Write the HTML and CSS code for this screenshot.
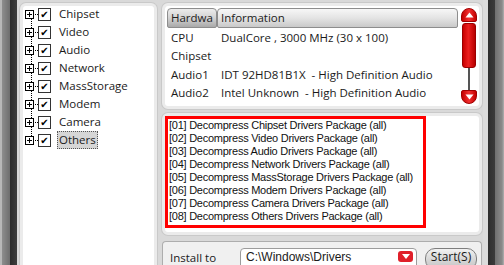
FILE: index.html
```html
<!DOCTYPE html>
<html lang="en">
<head>
  <meta charset="UTF-8" />
  <title>Driver Installer</title>
  <link rel="stylesheet" href="styles.css">
</head>
<body>

  <div class="frame-left"></div>

  <div class="content">

    <div class="tree-panel">
      <ul class="tree">
        <li class="tree-row"><span class="plus"></span><span class="check">&#10004;</span><span class="label">Chipset</span></li>
        <li class="tree-row"><span class="plus"></span><span class="check">&#10004;</span><span class="label">Video</span></li>
        <li class="tree-row"><span class="plus"></span><span class="check">&#10004;</span><span class="label">Audio</span></li>
        <li class="tree-row"><span class="plus"></span><span class="check">&#10004;</span><span class="label">Network</span></li>
        <li class="tree-row"><span class="plus"></span><span class="check">&#10004;</span><span class="label">MassStorage</span></li>
        <li class="tree-row"><span class="plus"></span><span class="check">&#10004;</span><span class="label">Modem</span></li>
        <li class="tree-row"><span class="plus"></span><span class="check">&#10004;</span><span class="label">Camera</span></li>
        <li class="tree-row last"><span class="plus"></span><span class="check">&#10004;</span><span class="label selected">Others</span></li>
      </ul>
    </div>

    <div class="right-col">

      <div class="panel hw-panel">
        <div class="hw-list">
          <div class="hw-head">
            <div class="col-btn col-hw">Hardwa</div>
            <div class="col-btn col-info">Information</div>
          </div>
          <div class="hw-row"><span class="c1">CPU</span><span>DualCore , 3000 MHz (30 x 100)</span></div>
          <div class="hw-row"><span class="c1">Chipset</span><span></span></div>
          <div class="hw-row"><span class="c1">Audio1</span><span>IDT 92HD81B1X &nbsp;- High Definition Audio</span></div>
          <div class="hw-row"><span class="c1">Audio2</span><span>Intel Unknown &nbsp;- High Definition Audio</span></div>
        </div>
        <div class="scrollbar">
          <div class="sb-btn sb-up">
            <svg width="9" height="6" viewBox="0 0 9 6"><path d="M4.5 0.5 L8.5 5.5 L0.5 5.5 Z" fill="#fff"/></svg>
          </div>
          <div class="sb-thumb"></div>
          <div class="sb-track"></div>
          <div class="sb-btn sb-down">
            <svg width="9" height="6" viewBox="0 0 9 6"><path d="M0.5 0.5 L8.5 0.5 L4.5 5.5 Z" fill="#fff"/></svg>
          </div>
        </div>
      </div>

      <div class="panel log-panel">
        <div class="log">
          <div>[01] Decompress Chipset Drivers Package (all)</div>
          <div>[02] Decompress Video Drivers Package (all)</div>
          <div>[03] Decompress Audio Drivers Package (all)</div>
          <div>[04] Decompress Network Drivers Package (all)</div>
          <div>[05] Decompress MassStorage Drivers Package (all)</div>
          <div>[06] Decompress Modem Drivers Package (all)</div>
          <div>[07] Decompress Camera Drivers Package (all)</div>
          <div>[08] Decompress Others Drivers Package (all)</div>
        </div>
      </div>

      <div class="install-panel">
        <span class="install-label">Install to</span>
        <div class="combo">
          <span>C:\Windows\Drivers</span>
          <span class="combo-btn">
            <svg width="8" height="5" viewBox="0 0 8 5"><path d="M0 0 L8 0 L4 5 Z" fill="#fff"/></svg>
          </span>
        </div>
        <div class="start-btn">Start(S)</div>
      </div>

    </div>
  </div>

  <div class="frame-right"></div>

</body>
</html>
```

FILE: styles.css
```css
* { margin: 0; padding: 0; box-sizing: border-box; }

body {
  width: 504px;
  height: 265px;
  overflow: hidden;
  display: flex;
  background: #ececec;
  font-family: 'Open Sans', sans-serif;
  font-size: 11.5px;
  color: #1a1a1a;
}

.frame-left {
  width: 17px;
  flex: none;
  background: linear-gradient(to right, #b8b8b8 0, #b8b8b8 2px, #8e8e8e 2px, #6e6e6e 10px, #2c2c2c 10px, #3e3e3e 17px);
}

.frame-right {
  width: 21px;
  flex: none;
  background: linear-gradient(to right, #dcdcdc 0, #dcdcdc 5px, #2e2e2e 5px, #3a3a3a 12px, #6e6e6e 12px, #8a8a8a 19px, #b0b0b0 21px);
}

.content {
  flex: 1;
  display: flex;
  gap: 5px;
  padding: 3px 0 0 3px;
  background: #d9d9d9;
}

/* tree */

.tree-panel {
  width: 137px;
  flex: none;
  background: #fff;
  border: 3px solid #ebebeb;
  border-bottom: none;
  border-radius: 6px 6px 0 0;
  box-shadow: 0 0 0 1px #c9c9c9;
}

.tree {
  list-style: none;
  padding-left: 2px;
  margin-top: -1px;
}

.tree-row {
  height: 18px;
  display: flex;
  align-items: center;
  position: relative;
}

.tree-row::before {
  content: "";
  position: absolute;
  left: 6px;
  top: 13px;
  height: 18px;
  border-left: 1px dotted #000;
}

.tree-row.last::before { display: none; }

.plus {
  width: 9px;
  height: 9px;
  border: 1px solid #000;
  position: relative;
  background: #fff;
  flex: none;
  z-index: 1;
}

.plus::before {
  content: "";
  position: absolute;
  left: 1px;
  top: 3px;
  width: 5px;
  height: 1px;
  background: #000;
}

.plus::after {
  content: "";
  position: absolute;
  left: 3px;
  top: 1px;
  width: 1px;
  height: 5px;
  background: #000;
}

.check {
  width: 13px;
  height: 13px;
  border: 1px solid #333;
  margin-left: 4px;
  font-size: 10px;
  line-height: 11px;
  text-align: center;
  color: #000;
  font-family: 'DejaVu Sans', sans-serif;
  position: relative;
  flex: none;
}

.check::before {
  content: "";
  position: absolute;
  right: 12px;
  top: 5px;
  width: 5px;
  border-top: 1px dotted #000;
}

.label {
  margin-left: 6px;
  padding: 0 1px;
  line-height: 16px;
  border: 1px dotted transparent;
}

.label.selected {
  background: #d6d6d6;
  border-color: #555;
}

/* right column */

.right-col {
  width: 320px;
  flex: none;
  display: flex;
  flex-direction: column;
  min-height: 0;
}

.panel {
  flex: none;
  background: #fff;
  border: 3px solid #ebebeb;
  border-radius: 6px;
  box-shadow: 0 0 0 1px #c9c9c9;
}

.hw-panel {
  height: 106px;
  display: flex;
  padding: 2px 2px 2px 2px;
}

.hw-list {
  flex: 1;
}

.hw-head {
  display: flex;
  height: 20px;
}

.col-btn {
  height: 20px;
  line-height: 18px;
  padding-left: 3px;
  border: 1px solid #8d8d8d;
  border-radius: 4px 4px 2px 2px;
  background: linear-gradient(#f7f7f7, #e4e4e4 50%, #c9c9c9);
  color: #222;
}

.col-hw {
  width: 50px;
  background: linear-gradient(#ececec, #d2d2d2 50%, #a9a9a9);
}

.col-info {
  flex: 1;
}

.hw-row {
  display: flex;
  height: 18.5px;
  align-items: center;
}

.hw-row .c1 {
  width: 50px;
  padding-left: 4px;
  flex: none;
}

.hw-row span + span {
  padding-left: 4px;
}

.scrollbar {
  width: 16px;
  margin-left: 3px;
  display: flex;
  flex-direction: column;
  align-items: center;
}

.sb-btn {
  width: 16px;
  height: 14px;
  background: linear-gradient(to right, #c40000, #f23030 50%, #c40000);
  border: 1px solid #a00000;
  display: flex;
  align-items: center;
  justify-content: center;
}

.sb-up { border-radius: 8px 8px 2px 2px; }
.sb-down { border-radius: 2px 2px 8px 8px; }

.sb-thumb {
  width: 14px;
  height: 45px;
  margin-top: 1px;
  border: 1px solid #9a0000;
  border-radius: 3px;
  background: linear-gradient(to right, #c80000, #ec2020 45%, #b80000);
}

.sb-track {
  flex: 1;
  width: 2px;
  background: #555;
}

.log-panel {
  height: 122px;
  margin-top: 4px;
}

.log {
  width: 261px;
  height: 112px;
  border: 3px solid #f00;
  padding: 0 0 0 1px;
  font-family: 'Liberation Sans', Arial, sans-serif;
  font-size: 11px;
  letter-spacing: -0.25px;
  line-height: 13px;
  white-space: nowrap;
  color: #111;
}

.install-panel {
  flex: 1;
  min-height: 0;
  overflow: hidden;
  margin-top: 6px;
  display: flex;
  align-items: flex-start;
  padding: 6px 0 0 7px;
  border: 1px solid #adadad;
  border-bottom: none;
  border-radius: 4px 4px 0 0;
  background: #f0f0f0;
}

.install-label {
  width: 70px;
  padding-top: 2px;
  line-height: 16px;
  flex: none;
}

.combo {
  width: 177px;
  height: 22px;
  flex: none;
  border: 1px solid #9c9c9c;
  border-radius: 4px;
  background: #fff;
  display: flex;
  align-items: flex-start;
  justify-content: space-between;
  padding: 1px 3px 0 5px;
  line-height: 14px;
  font-family: 'Liberation Sans', Arial, sans-serif;
  font-size: 12px;
}

.combo-btn {
  width: 15px;
  height: 11px;
  margin-top: 1px;
  border-radius: 3px;
  background: #e0202a;
  display: flex;
  align-items: center;
  justify-content: center;
}

.start-btn {
  margin-left: 8px;
  width: 52px;
  height: 22px;
  flex: none;
  border: 1px solid #7e7e7e;
  border-radius: 10px;
  background: linear-gradient(#f2f2f2, #d8d8d8 50%, #c4c4c4);
  text-align: center;
  line-height: 16px;
  font-size: 12px;
}
```
